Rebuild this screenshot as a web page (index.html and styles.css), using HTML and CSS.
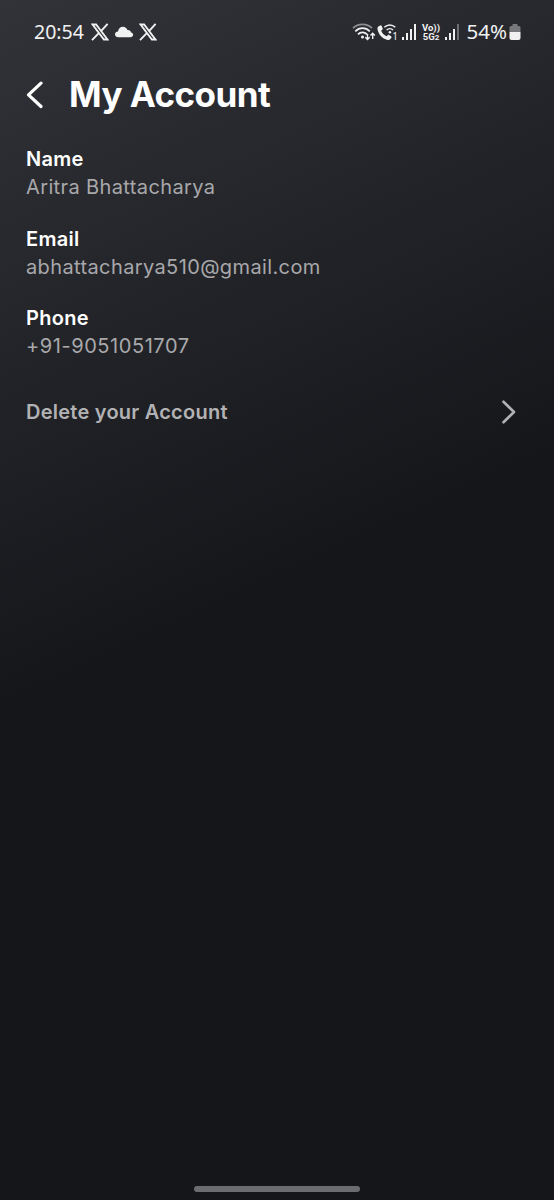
FILE: index.html
```html
<!DOCTYPE html>
<html lang="en">
<head>
<meta charset="utf-8">
<title>My Account</title>
<link rel="stylesheet" href="styles.css">
</head>
<body>
<div class="screen">
  <div class="status">
    <span class="clock">20:54</span>
    <svg class="x-logo" width="18" height="18" viewBox="0 0 18 18"><path d="M1.500 1.500h3.600l11.400 15h-3.600z" fill="none" stroke="currentColor" stroke-width="1.900"/><path d="M16.600.8 10 8.100M7.800 10.200 1 17.200" stroke="currentColor" stroke-width="1.900"/></svg>
    <svg class="cloud" width="20" height="12" viewBox="0 0 20 12"><path d="M4.400 11.200C2 11.200 1 9.900 1 8.300c0-1.700 1.300-2.700 3-2.800C4.500 2.700 6.300.8 8.900.8c2.300 0 3.900 1.300 4.600 3.200 2.100-.1 3.300 1 3.600 2.500 1.300.2 2 1.100 2 2.200 0 1.500-1.100 2.500-2.800 2.500z" fill="currentColor"/></svg>
    <svg class="x-logo" width="18" height="18" viewBox="0 0 18 18"><path d="M1.500 1.500h3.600l11.400 15h-3.600z" fill="none" stroke="currentColor" stroke-width="1.900"/><path d="M16.600.8 10 8.100M7.800 10.200 1 17.200" stroke="currentColor" stroke-width="1.900"/></svg>
    <div class="indicators">
      <svg width="24" height="18" viewBox="0 0 24 18"><g fill="none" stroke="currentColor" stroke-width="1.700"><path d="M1 5.200C6 .1 15 .1 20 5.200" opacity=".5"/><path d="M3.300 8.300c4-4.200 10.500-4.200 14.500 0M6 11.300c2.400-2.600 6.500-2.600 9 0"/><path d="M15.500 11v5.500M13.300 14.300l2.200 2.300 2.200-2.300M20.700 16v-5.500M18.500 12.500l2.200-2.300 2.200 2.300" stroke-width="1.400"/></g><circle cx="10.500" cy="14" r="1.500" fill="currentColor"/></svg>
      <span class="call">
        <svg width="20" height="18" viewBox="0 0 20 18"><path d="M1.700 3.200 3.300 2.400c.6-.3 1.100 0 1.400.6l1 2.400c.2.500 0 1-.4 1.300l-1.100.9c.9 2.800 2.800 4.700 5.500 5.700l1-1.100c.4-.4.900-.5 1.400-.2l2 1.300c.5.300.6.900.3 1.400l-1 1.400c-.7.900-1.700 1.200-2.800.9C5 15.500 1.400 11.500.5 6 .3 4.800.7 3.700 1.700 3.200z" fill="currentColor"/><g fill="none" stroke="currentColor" stroke-width="1.500"><path d="M7.300 4.300c3.200-3.200 7.800-3.200 11 0M9.700 7c1.800-1.800 4.500-1.800 6.300 0"/></g><circle cx="12.900" cy="9.200" r="1.300" fill="currentColor"/></svg><span class="sim">1</span>
      </span>
      <svg class="bars-one" width="15" height="16" viewBox="0 0 15 16"><path d="M0 13h2v3H0zM4 9h2v7H4zM8 5h2v11H8zM12 0h2v16h-2z" fill="currentColor"/></svg>
      <span class="volte"><span>Vo))</span><span>5G<small>2</small></span></span>
      <svg class="bars-two" width="14" height="16" viewBox="0 0 14 16"><path d="M0 13h2v3H0zM4 9h2v7H4zM8 5h2v11H8z" fill="currentColor"/><path d="M12 0h2v16h-2z" fill="currentColor" opacity=".35"/></svg>
      <span class="percent">54%</span>
      <svg class="battery" width="12" height="16" viewBox="0 0 12 16"><path d="M3.500 0h5v2H10a1.500 1.500 0 0 1 1.500 1.500V8H.5V3.500A1.500 1.500 0 0 1 2 2h1.500z" fill="#77787b"/><path d="M.5 8h11v6a2 2 0 0 1-2 2h-7a2 2 0 0 1-2-2z" fill="currentColor"/></svg>
    </div>
  </div>
  <header class="header">
    <svg width="18" height="30" viewBox="0 0 18 30"><path d="M16 3.200 3.500 14.800 16 26.500" fill="none" stroke="currentColor" stroke-width="3.200" stroke-linecap="round" stroke-linejoin="round"/></svg>
    <h1 class="title">My Account</h1>
  </header>
  <dl class="details">
    <div><dt>Name</dt><dd>Aritra Bhattacharya</dd></div>
    <div><dt>Email</dt><dd>abhattacharya510@gmail.com</dd></div>
    <div><dt>Phone</dt><dd class="phone">+91-9051051707</dd></div>
  </dl>
  <div class="delete">
    <span>Delete your Account</span>
    <svg width="16" height="26" viewBox="0 0 16 26"><path d="M2.500 2.700 13 13 2.500 23.300" fill="none" stroke="currentColor" stroke-width="2.600" stroke-linecap="round" stroke-linejoin="round"/></svg>
  </div>
  <div class="home-bar"></div>
</div>
</body>
</html>
```
FILE: styles.css
```css
* { box-sizing: border-box; }
body { margin: 0; background: #15161a; }
svg { display: block; flex: none; }
.screen {
  display: flex;
  flex-direction: column;
  width: 554px;
  height: 1200px;
  overflow: hidden;
  font-family: Inter, "Liberation Sans", sans-serif;
  color: #fff;
  background: linear-gradient(155deg, #323338 0%, #15161a 49%);
}
.status {
  display: flex;
  align-items: center;
  height: 64px;
  padding: 0 33px 0 34px;
  font-family: "Noto Sans", sans-serif;
  color: #f1f1f2;
}
.clock { width: 57px; font-size: 19.5px; line-height: 26px; margin-top: -1px; }
.cloud { margin: 0 5px; }
.indicators {
  display: flex;
  align-items: center;
  margin-left: auto;
}
.call { display: flex; align-items: flex-end; margin-left: 1px; }
.sim { margin-left: -5px; font-size: 10px; line-height: 10px; }
.bars-one { margin-left: 4px; }
.volte {
  display: flex;
  flex-direction: column;
  align-items: center;
  width: 18px;
  margin-left: 5px;
  font-family: Roboto, sans-serif;
  font-size: 9.5px;
  font-weight: 700;
  line-height: 9px;
}
.volte small { font-size: 8px; }
.bars-two { margin-left: 5px; }
.percent { margin: -2px 0 0 7.5px; font-size: 20.5px; line-height: 26px; }
.battery { margin-left: 2px; }
.header {
  display: flex;
  align-items: center;
  height: 62px;
  padding-left: 25px;
}
.title {
  margin: -2px 0 0 26px;
  font-size: 35px;
  font-weight: 700;
  line-height: 44px;
  letter-spacing: -.55px;
}
.details {
  display: flex;
  flex-direction: column;
  gap: 23.5px;
  margin: 19px 26px 0;
  font-size: 20px;
  line-height: 28px;
}
dt { font-weight: 600; letter-spacing: .3px; }
dd { margin: 0; color: #a8a8ab; font-weight: 400; letter-spacing: .38px; }
.phone { letter-spacing: .56px; }
.delete {
  display: flex;
  align-items: center;
  justify-content: space-between;
  height: 40px;
  margin: 32px 37px 0 26px;
  font-size: 20px;
  font-weight: 600;
  letter-spacing: .24px;
  color: #b2b2b5;
}
.home-bar {
  width: 166px;
  height: 6px;
  margin: auto auto 8px 194px;
  border-radius: 3px;
  background: #6b6c6f;
}
```
